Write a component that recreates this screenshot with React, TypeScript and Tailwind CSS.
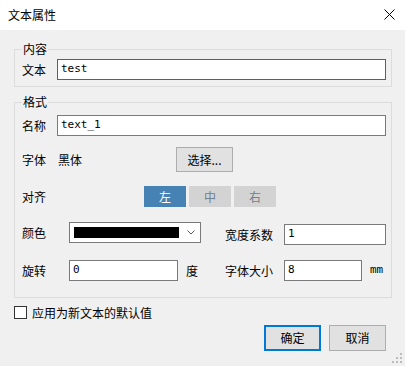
import React from 'react';

const font = { fontFamily: '"Noto Sans CJK SC", "Noto Sans", sans-serif' };

type TextBoxProps = {
  value: string;
  width: string;
  focused?: boolean;
}

const TextBox: React.FC<TextBoxProps> = ({ value, width, focused }) => (
  <div
    className={`${width} h-[21px] bg-white border flex items-center pl-[3px] text-[11px] text-black font-['DejaVu_Sans_Mono',monospace] ${
      focused ? 'border-[#0078d7]' : 'border-[#7a7a7a]'
    }`}
  >
    {value}
  </div>
);

const Label: React.FC<{ text: string; width: string }> = ({ text, width }) => (
  <span className={`${width} shrink-0 text-[12px] leading-[16px] text-black`}>{text}</span>
);

const Group: React.FC<{ title: string; className?: string; children: React.ReactNode }> = ({ title, className, children }) => (
  <fieldset className={`border border-[#dcdcdc] px-[7px] ${className ?? ''}`}>
    <legend className="ml-[0px] px-[1px] text-[12px] leading-[16px] text-black">{title}</legend>
    {children}
  </fieldset>
);

const TextPropertiesDialog = () => {
  return (
    <div className="w-[405px] h-[366px] bg-[#f0f0f0] flex flex-col relative overflow-hidden" style={font}>
      {/* title bar */}
      <div className="h-[30px] bg-white flex items-center justify-between pl-[8px] pr-[10px] shrink-0">
        <span className="text-[12px] text-black">文本属性</span>
        <svg width="11" height="11" viewBox="0 0 11 11" className="mt-[-1px]">
          <path d="M0.5 0.5 L10.5 10.5 M10.5 0.5 L0.5 10.5" stroke="#000" strokeWidth="1" fill="none" />
        </svg>
      </div>

      <div className="flex flex-col pl-[14px] pr-[13px] pt-[11px]">
        <Group title="内容" className="pt-[2px] pb-[6px] pr-[5px]">
          <div className="flex items-center">
            <Label text="文本" width="w-[35px]" />
            <TextBox value="test" width="w-[329px]" focused />
          </div>
        </Group>

        <Group title="格式" className="mt-[7px] pt-[5px] pb-[16px] pr-[5px]">
          <div className="flex items-center">
            <Label text="名称" width="w-[35px]" />
            <TextBox value="text_1" width="w-[329px]" />
          </div>

          <div className="flex items-center mt-[11px] h-[25px]">
            <Label text="字体" width="w-[35px]" />
            <span className="w-[119px] pl-[1px] text-[12px] text-black">黑体</span>
            <button className="w-[57px] h-[25px] bg-[#e1e1e1] border border-[#adadad] text-[12px] text-black flex items-center justify-center">
              选择...
            </button>
          </div>

          <div className="flex items-center mt-[14px] h-[21px]">
            <Label text="对齐" width="w-[122px]" />
            <div className="flex gap-[3px]">
              <div className="w-[42px] h-[21px] bg-[#4682b4] text-white text-[12px] flex items-center justify-center">左</div>
              <div className="w-[42px] h-[21px] bg-[#d3d3d3] text-[#708090] text-[12px] flex items-center justify-center">中</div>
              <div className="w-[42px] h-[21px] bg-[#d3d3d3] text-[#708090] text-[12px] flex items-center justify-center">右</div>
            </div>
          </div>

          <div className="flex items-start mt-[15px] h-[23px]">
            <div className="flex items-center h-[21px]">
              <Label text="颜色" width="w-[47px]" />
              <div className="w-[132px] h-[21px] bg-white border border-[#7a7a7a] flex items-center pl-[4px] pr-[5px]">
                <div className="w-[105px] h-[11px] bg-black" />
                <svg width="8" height="5" viewBox="0 0 8 5" className="ml-auto">
                  <path d="M0.5 0.5 L4 4 L7.5 0.5" stroke="#5a5a5a" strokeWidth="1" fill="none" />
                </svg>
              </div>
            </div>
            <div className="flex items-center h-[21px] mt-[2px] ml-[24px]">
              <Label text="宽度系数" width="w-[59px]" />
              <TextBox value="1" width="w-[102px]" />
            </div>
          </div>

          <div className="flex items-center mt-[15px] h-[21px]">
            <Label text="旋转" width="w-[47px]" />
            <TextBox value="0" width="w-[109px]" />
            <span className="w-[47px] pl-[8px] text-[12px] text-black">度</span>
            <Label text="字体大小" width="w-[59px]" />
            <TextBox value="8" width="w-[78px]" />
            <span className="pl-[8px] text-[11px] text-black" style={{ fontFamily: '"Liberation Mono", monospace' }}>
              mm
            </span>
          </div>
        </Group>

        <div className="flex items-center mt-[8px] h-[13px]">
          <div className="w-[13px] h-[13px] bg-white border border-[#333333]" />
          <span className="ml-[5px] text-[12px] text-black">应用为新文本的默认值</span>
        </div>

        <div className="flex justify-end gap-[8px] mt-[6px] pr-[6px]">
          <button className="w-[57px] h-[26px] bg-[#e1e1e1] border-2 border-[#0078d7] text-[12px] text-black flex items-center justify-center">
            确定
          </button>
          <button className="w-[57px] h-[26px] bg-[#e1e1e1] border border-[#adadad] text-[12px] text-black flex items-center justify-center">
            取消
          </button>
        </div>
      </div>

      {/* size grip */}
      <svg width="10" height="10" viewBox="0 0 10 10" className="absolute right-[3px] bottom-[3px]">
        <rect x="8" y="0" width="2" height="2" fill="#bcbcbc" />
        <rect x="4" y="4" width="2" height="2" fill="#bcbcbc" />
        <rect x="8" y="4" width="2" height="2" fill="#bcbcbc" />
        <rect x="0" y="8" width="2" height="2" fill="#bcbcbc" />
        <rect x="4" y="8" width="2" height="2" fill="#bcbcbc" />
        <rect x="8" y="8" width="2" height="2" fill="#bcbcbc" />
      </svg>
    </div>
  );
};

export default TextPropertiesDialog;
